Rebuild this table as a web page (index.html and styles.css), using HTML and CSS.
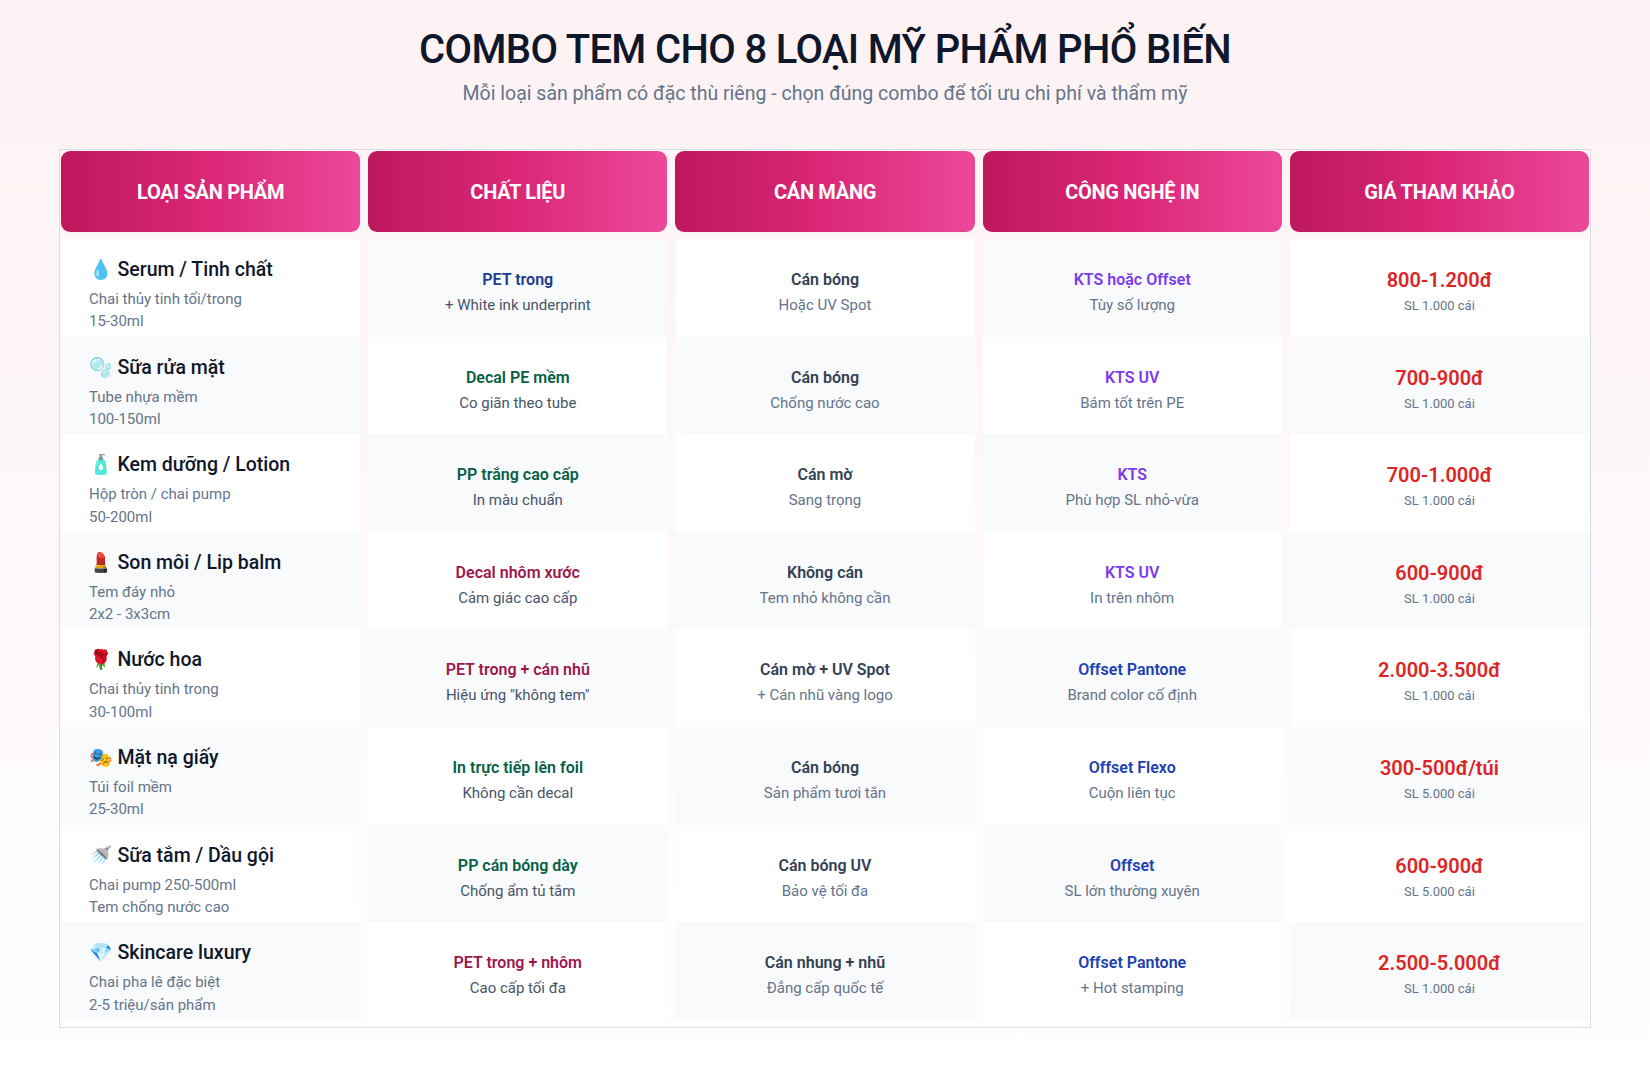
FILE: index.html
```html
<!DOCTYPE html>
<html lang="vi">
<head>
<meta charset="utf-8">
<title>Combo tem cho 8 loại mỹ phẩm</title>
<link rel="stylesheet" href="styles.css">
</head>
<body>
<div class="page">
  <header class="intro">
    <h1 class="title">COMBO TEM CHO 8 LOẠI MỸ PHẨM PHỔ BIẾN</h1>
    <p class="subtitle">Mỗi loại sản phẩm có đặc thù riêng - chọn đúng combo để tối ưu chi phí và thẩm mỹ</p>
  </header>

  <div class="table">
    <div class="head">
      <div class="th">LOẠI SẢN PHẨM</div>
      <div class="th">CHẤT LIỆU</div>
      <div class="th">CÁN MÀNG</div>
      <div class="th">CÔNG NGHỆ IN</div>
      <div class="th">GIÁ THAM KHẢO</div>
    </div>
    <div class="body">
      <div class="row">
        <div class="cell product"><div class="p-name"><span class="emo">💧</span> Serum / Tinh chất</div><div class="p-sub">Chai thủy tinh tối/trong</div><div class="p-sub">15-30ml</div></div>
        <div class="cell mid"><div class="main c-blue">PET trong</div><div class="sub dark">+ White ink underprint</div></div>
        <div class="cell mid"><div class="main c-slate">Cán bóng</div><div class="sub">Hoặc UV Spot</div></div>
        <div class="cell mid"><div class="main c-purple">KTS hoặc Offset</div><div class="sub">Tùy số lượng</div></div>
        <div class="cell mid"><div class="price">800-1.200đ</div><div class="qty">SL 1.000 cái</div></div>
      </div>
      <div class="row">
        <div class="cell product"><div class="p-name"><span class="emo">🫧</span> Sữa rửa mặt</div><div class="p-sub">Tube nhựa mềm</div><div class="p-sub">100-150ml</div></div>
        <div class="cell mid"><div class="main c-green">Decal PE mềm</div><div class="sub dark">Co giãn theo tube</div></div>
        <div class="cell mid"><div class="main c-slate">Cán bóng</div><div class="sub">Chống nước cao</div></div>
        <div class="cell mid"><div class="main c-purple">KTS UV</div><div class="sub">Bám tốt trên PE</div></div>
        <div class="cell mid"><div class="price">700-900đ</div><div class="qty">SL 1.000 cái</div></div>
      </div>
      <div class="row">
        <div class="cell product"><div class="p-name"><span class="emo">🧴</span> Kem dưỡng / Lotion</div><div class="p-sub">Hộp tròn / chai pump</div><div class="p-sub">50-200ml</div></div>
        <div class="cell mid"><div class="main c-green">PP trắng cao cấp</div><div class="sub dark">In màu chuẩn</div></div>
        <div class="cell mid"><div class="main c-slate">Cán mờ</div><div class="sub">Sang trọng</div></div>
        <div class="cell mid"><div class="main c-purple">KTS</div><div class="sub">Phù hợp SL nhỏ-vừa</div></div>
        <div class="cell mid"><div class="price">700-1.000đ</div><div class="qty">SL 1.000 cái</div></div>
      </div>
      <div class="row">
        <div class="cell product"><div class="p-name"><span class="emo">💄</span> Son môi / Lip balm</div><div class="p-sub">Tem đáy nhỏ</div><div class="p-sub">2x2 - 3x3cm</div></div>
        <div class="cell mid"><div class="main c-pink">Decal nhôm xước</div><div class="sub dark">Cảm giác cao cấp</div></div>
        <div class="cell mid"><div class="main c-slate">Không cán</div><div class="sub">Tem nhỏ không cần</div></div>
        <div class="cell mid"><div class="main c-purple">KTS UV</div><div class="sub">In trên nhôm</div></div>
        <div class="cell mid"><div class="price">600-900đ</div><div class="qty">SL 1.000 cái</div></div>
      </div>
      <div class="row">
        <div class="cell product"><div class="p-name"><span class="emo">🌹</span> Nước hoa</div><div class="p-sub">Chai thủy tinh trong</div><div class="p-sub">30-100ml</div></div>
        <div class="cell mid"><div class="main c-pink">PET trong + cán nhũ</div><div class="sub dark">Hiệu ứng "không tem"</div></div>
        <div class="cell mid"><div class="main c-slate">Cán mờ + UV Spot</div><div class="sub">+ Cán nhũ vàng logo</div></div>
        <div class="cell mid"><div class="main c-navy">Offset Pantone</div><div class="sub">Brand color cố định</div></div>
        <div class="cell mid"><div class="price">2.000-3.500đ</div><div class="qty">SL 1.000 cái</div></div>
      </div>
      <div class="row">
        <div class="cell product"><div class="p-name"><span class="emo">🎭</span> Mặt nạ giấy</div><div class="p-sub">Túi foil mềm</div><div class="p-sub">25-30ml</div></div>
        <div class="cell mid"><div class="main c-green">In trực tiếp lên foil</div><div class="sub dark">Không cần decal</div></div>
        <div class="cell mid"><div class="main c-slate">Cán bóng</div><div class="sub">Sản phẩm tươi tắn</div></div>
        <div class="cell mid"><div class="main c-navy">Offset Flexo</div><div class="sub">Cuộn liên tục</div></div>
        <div class="cell mid"><div class="price">300-500đ/túi</div><div class="qty">SL 5.000 cái</div></div>
      </div>
      <div class="row">
        <div class="cell product"><div class="p-name"><span class="emo">🚿</span> Sữa tắm / Dầu gội</div><div class="p-sub">Chai pump 250-500ml</div><div class="p-sub">Tem chống nước cao</div></div>
        <div class="cell mid"><div class="main c-green">PP cán bóng dày</div><div class="sub dark">Chống ẩm tủ tắm</div></div>
        <div class="cell mid"><div class="main c-slate">Cán bóng UV</div><div class="sub">Bảo vệ tối đa</div></div>
        <div class="cell mid"><div class="main c-navy">Offset</div><div class="sub">SL lớn thường xuyên</div></div>
        <div class="cell mid"><div class="price">600-900đ</div><div class="qty">SL 5.000 cái</div></div>
      </div>
      <div class="row">
        <div class="cell product"><div class="p-name"><span class="emo">💎</span> Skincare luxury</div><div class="p-sub">Chai pha lê đặc biệt</div><div class="p-sub">2-5 triệu/sản phẩm</div></div>
        <div class="cell mid"><div class="main c-pink">PET trong + nhôm</div><div class="sub dark">Cao cấp tối đa</div></div>
        <div class="cell mid"><div class="main c-slate">Cán nhung + nhũ</div><div class="sub">Đẳng cấp quốc tế</div></div>
        <div class="cell mid"><div class="main c-navy">Offset Pantone</div><div class="sub">+ Hot stamping</div></div>
        <div class="cell mid"><div class="price">2.500-5.000đ</div><div class="qty">SL 1.000 cái</div></div>
      </div>
    </div>
  </div>
</div>
</body>
</html>
```
FILE: styles.css
```css
* { box-sizing: border-box; }
html, body {
  margin: 0;
  padding: 0;
}
body {
  font-family: Roboto, "Noto Sans", "Liberation Sans", sans-serif;
  background: linear-gradient(180deg, #fdf2f3 0%, #fef8f8 50%, #ffffff 100%);
  min-height: 1080px;
  color: #0f172a;
}
.page {
  padding-top: 27px;
}
.intro {
  text-align: center;
}
.title {
  margin: 0;
  font-size: 40px;
  line-height: 46px;
  font-weight: 500;
  letter-spacing: -0.65px;
  color: #0f172a;
}
.subtitle {
  margin: 9px 0 0;
  font-size: 19.5px;
  line-height: 24px;
  color: #64748b;
}
.table {
  width: 1532px;
  margin: 43px auto 0;
  border: 1px solid #d6dde8;
  padding: 1px 1px 7px;
}
.head, .row {
  display: grid;
  grid-template-columns: repeat(5, 1fr);
  column-gap: 8px;
}
.head {
  margin-bottom: 7px;
}
.th {
  height: 81px;
  border-radius: 9px;
  background: linear-gradient(90deg, #be185d 0%, #db2777 50%, #ec4899 100%);
  color: #ffffff;
  font-size: 20px;
  font-weight: 700;
  display: flex;
  align-items: center;
  justify-content: center;
  letter-spacing: -0.3px;
}
.row {
  height: 97.6px;
}
.cell {
  background: #ffffff;
}
.row:nth-child(odd) .cell:nth-child(even),
.row:nth-child(even) .cell:nth-child(odd) {
  background: #f9fafb;
}
.product {
  padding: 17px 28px 0;
}
.p-name {
  font-size: 19.5px;
  line-height: 28px;
  font-weight: 500;
  color: #0f172a;
  margin-bottom: 4px;
}
.emo {
  font-family: "Noto Color Emoji", sans-serif;
  font-size: 19px;
}
.p-sub {
  font-size: 15px;
  line-height: 22.4px;
  color: #64748b;
}
.mid {
  text-align: center;
  padding-top: 29px;
}
.main {
  font-size: 16px;
  line-height: 24px;
  font-weight: 600;
}
.sub {
  font-size: 15px;
  line-height: 23px;
  margin-top: 2px;
  color: #64748b;
}
.sub.dark { color: #475569; }
.c-blue { color: #1e3a8a; }
.c-navy { color: #1e40af; }
.c-green { color: #065f46; }
.c-pink { color: #9d174d; }
.c-purple { color: #7c3aed; }
.c-slate { color: #334155; }
.price {
  font-size: 20px;
  line-height: 24px;
  font-weight: 600;
  color: #dc2626;
}
.qty {
  margin-top: 4px;
  font-size: 13px;
  line-height: 20px;
  color: #64748b;
}
```
